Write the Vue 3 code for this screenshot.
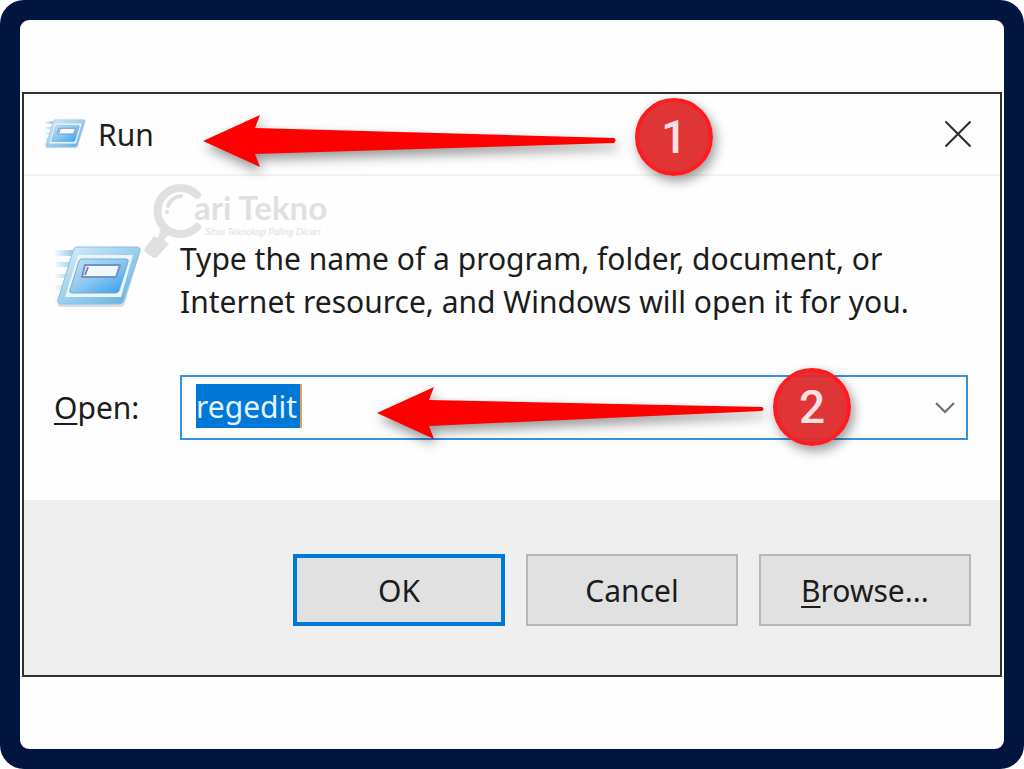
<script setup>
import { ref } from 'vue'

const command = ref('regedit')
</script>

<template>
  <main class="frame">
    <div class="sheet">
    <section class="dialog" aria-labelledby="dialog-title">
      <header class="titlebar">
        <svg class="title-icon" viewBox="0 0 88 62" aria-hidden="true">
          <use href="#run-glyph" />
        </svg>
        <h1 id="dialog-title">Run</h1>
        <button class="close" type="button" aria-label="Close">
          <svg viewBox="0 0 28 28" aria-hidden="true">
            <path d="M1.500 1.500L26.500 26.500M26.500 1.500L1.500 26.500" />
          </svg>
        </button>
      </header>

      <div class="body">
        <svg class="run-icon" viewBox="0 0 88 62" aria-hidden="true">
          <defs>
            <linearGradient id="run-frame" x1="0" y1="0" x2="1" y2="1">
              <stop offset="0" stop-color="#d9effa" />
              <stop offset="0.5" stop-color="#9bd0f0" />
              <stop offset="1" stop-color="#62abdf" />
            </linearGradient>
            <linearGradient id="run-panel" x1="0" y1="0" x2="1" y2="1">
              <stop offset="0" stop-color="#c4e2f5" />
              <stop offset="0.5" stop-color="#8cc6f0" />
              <stop offset="1" stop-color="#2f9af0" />
            </linearGradient>
            <linearGradient id="run-trail" x1="0" y1="0" x2="1" y2="0">
              <stop offset="0" stop-color="#9ccbe8" stop-opacity="0.1" />
              <stop offset="1" stop-color="#7db8df" />
            </linearGradient>
            <g id="run-glyph">
              <path d="M1 4h22l-2 6H1zM1 16h18l-2 5H1zM1 28h15l-2 4H1zM1 39h11l-2 5H1zM1 50h8l-2 6H1z" fill="url(#run-trail)" />
              <path d="M24 3h60q3 0 2 3L71 57q-1 4-5 4H7q-4 0-3-4L20 6q1-3 4-3z" fill="#8793a0" opacity="0.3" />
              <path d="M23 1h60q4 0 3 4L70 54q-1 4-5 4H7q-4 0-3-4L19 5q1-4 4-4z" fill="url(#run-frame)" stroke="#8fc0df" stroke-width="1" />
              <path d="M24 9h55L67 51H11z" fill="#eaf5f8" />
              <path d="M28 13h44q3 0 2 3l-9 29q-1 2-3 2H18q-3 0-2-3l9-29q1-2 3-2z" fill="url(#run-panel)" stroke="#79a9d2" stroke-width="1" />
              <path d="M31 19h35l-4 12H28z" fill="#f1f7fd" stroke="#6f94c8" stroke-width="2" stroke-linejoin="round" />
              <path d="M34 21l-3 8" stroke="#7d858e" stroke-width="2" />
            </g>
          </defs>
          <use href="#run-glyph" />
        </svg>
        <p class="message">
          Type the name of a program, folder, document, or<br />
          Internet resource, and Windows will open it for you.
        </p>

        <label class="open-label" for="command"><u>O</u>pen:</label>
        <div class="combo">
          <input id="command" v-model="command" type="text" spellcheck="false" autocomplete="off" />
          <button class="drop" type="button" aria-label="Show recent commands">
            <svg viewBox="0 0 22 14" aria-hidden="true"><path d="M2 2L11 11L20 2" /></svg>
          </button>
        </div>
      </div>

      <footer class="actions">
        <button class="action primary" type="button">OK</button>
        <button class="action" type="button">Cancel</button>
        <button class="action" type="button"><span><u>B</u>rowse...</span></button>
      </footer>

      <div class="watermark">
        <svg class="lens" viewBox="0 0 62 78" aria-hidden="true">
          <path d="M53 13A23 23 0 1 0 53 45" fill="none" stroke="#e0e0e0" stroke-width="8" stroke-linecap="round" />
          <path d="M24 24Q27 15 37 14" fill="none" stroke="#e0e0e0" stroke-width="4" stroke-linecap="round" />
          <circle cx="23" cy="30" r="2" fill="#e0e0e0" />
          <path d="M17 45L25 52L20 58L25 62L13 75Q11 77 8 75L1 70Q0 68 1 66L10 54L14 56z" fill="#e0e0e0" />
        </svg>
        <div class="brand">
          <span class="name">ari Tekno</span>
          <span class="tagline">Situs Teknologi Paling Dicari</span>
        </div>
      </div>

      <svg class="arrow arrow-one" viewBox="0 0 414 52" aria-hidden="true">
        <path d="M0 26L57 0L52 13L411 23Q414 25 411 28L52 39L57 52z" />
      </svg>
      <span class="badge badge-one">1</span>
      <svg class="arrow arrow-two" viewBox="0 0 388 52" aria-hidden="true">
        <path d="M0 26L57 0L52 13L385 20Q388 22 385 24L52 39L57 52z" />
      </svg>
      <span class="badge badge-two">2</span>
    </section>
    </div>
  </main>
</template>

<style>
body {
  margin: 0;
  background: #fff;
}
</style>

<style scoped>
.frame {
  display: flex;
  box-sizing: border-box;
  min-height: 100vh;
  padding: 20px;
  border-radius: 24px;
  background: #02153f;
  font-family: "Noto Sans", "Open Sans", sans-serif;
  font-size: 30px;
  color: #1c1c1c;
}

.sheet {
  flex: 1;
  display: flex;
  flex-direction: column;
  justify-content: center;
  padding: 0 2px;
  border-radius: 9px;
  background: #fefefe;
}

.dialog {
  position: relative;
  border: 2px solid #303034;
  background: #fefefe;
}

.titlebar {
  display: flex;
  align-items: center;
  box-sizing: border-box;
  height: 82px;
  padding: 0 28px 0 20px;
  border-bottom: 2px solid #f2f2f2;
}

.title-icon {
  width: 42px;
  height: 30px;
  margin-right: 12px;
}

h1 {
  flex: 1;
  margin: 0;
  font-size: 30px;
  font-weight: 400;
}

button {
  font: inherit;
  color: inherit;
  padding: 0;
}

.close {
  display: flex;
  border: 0;
  background: none;
}

.close svg {
  width: 28px;
  height: 28px;
  fill: none;
  stroke: #2a2a2a;
  stroke-width: 2;
}

.body {
  display: grid;
  grid-template-columns: 126px 1fr;
  row-gap: 52px;
  align-items: center;
  padding: 61px 32px 60px 30px;
}

.run-icon {
  width: 88px;
  height: 62px;
  margin-bottom: 6px;
}

.message {
  margin: 0;
  line-height: 43px;
  white-space: nowrap;
}

u {
  text-decoration-thickness: 2px;
  text-underline-offset: 4px;
  text-decoration-skip-ink: none;
}

.combo {
  display: flex;
  align-items: center;
  justify-content: space-between;
  box-sizing: border-box;
  height: 65px;
  padding: 0 10px 0 14px;
  border: 2px solid #3792de;
}

input {
  box-sizing: border-box;
  width: 106px;
  height: 44px;
  margin-bottom: 4px;
  padding: 2px 0 0;
  border: 0;
  border-right: 2px solid #ef9b55;
  outline: 0;
  border-radius: 0;
  background: #0078d7;
  color: #e6f2fd;
  font: inherit;
}

.drop {
  display: flex;
  border: 0;
  background: none;
}

.drop svg {
  width: 22px;
  height: 14px;
  fill: none;
  stroke: #6c6c6c;
  stroke-width: 2;
}

.actions {
  display: flex;
  justify-content: flex-end;
  gap: 21px;
  padding: 54px 29px 49px;
  background: #efefef;
}

.action {
  box-sizing: border-box;
  width: 212px;
  height: 72px;
  border: 2px solid #b7b7b7;
  background: #e1e1e1;
}

.primary {
  border: 4px solid #0078d7;
}

.watermark {
  position: absolute;
  left: 120px;
  top: 88px;
  display: flex;
  color: #e0e0e0;
}

.lens {
  width: 62px;
  height: 78px;
}

.brand {
  display: flex;
  flex-direction: column;
  margin-left: -12px;
  padding-top: 7px;
}

.name {
  font: 700 33px/36px Lato, sans-serif;
}

.tagline {
  padding-left: 11px;
  font: italic 10px/12px Lato, sans-serif;
}

.arrow {
  position: absolute;
  height: 52px;
  overflow: visible;
  fill: #f00;
  filter: drop-shadow(2px 6px 6px rgba(0, 0, 0, 0.4));
}

.arrow-one {
  left: 179px;
  top: 21px;
  width: 414px;
}

.arrow-two {
  left: 353px;
  top: 293px;
  width: 388px;
}

.badge {
  position: absolute;
  box-sizing: border-box;
  width: 78px;
  height: 78px;
  border: 4px solid #fd1c1f;
  border-radius: 50%;
  background: rgba(222, 42, 44, 0.95);
  box-shadow: 3px 5px 12px rgba(0, 0, 0, 0.4);
  color: #fbdfe1;
  font: 500 46px/70px Roboto, sans-serif;
  text-align: center;
}

.badge-one {
  left: 611px;
  top: 4px;
}

.badge-two {
  left: 749px;
  top: 274px;
}
</style>
